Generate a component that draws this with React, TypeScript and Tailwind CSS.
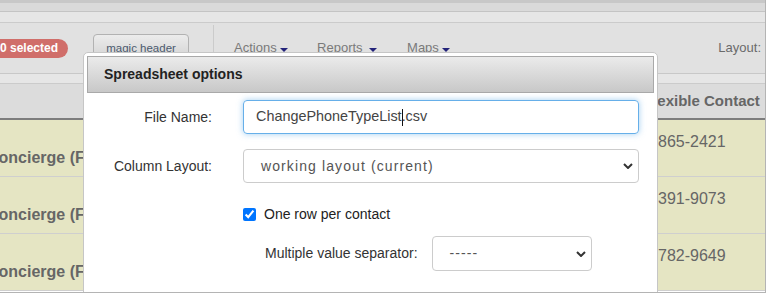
import React from "react";

function Caret() {
  return (
    <span className="inline-block w-[10px] h-[6px]">
      <svg width="10" height="6" viewBox="0 0 10 6">
        <path d="M1 1 L5 5 L9 1" fill="none" stroke="#333" strokeWidth="2" />
      </svg>
    </span>
  );
}

function Tri() {
  return (
    <span className="inline-block w-0 h-0 border-l-[4px] border-r-[4px] border-t-[4px] border-l-transparent border-r-transparent border-t-[#23237a] mt-[3px]" />
  );
}

const rows = [
  { left: "Concierge (Flexible)", right: "865-2421" },
  { left: "Concierge (Flexible)", right: "391-9073" },
  { left: "Concierge (Flexible)", right: "782-9649" },
];

export default function App() {
  return (
    <div className="relative w-[766px] h-[293px] overflow-hidden bg-white border-r border-b border-[#b4b4b4] font-['Liberation_Sans',Arial,sans-serif]">
      <div className="h-[3px] bg-[#c8c8c8]" />
      <div className="h-[9px] bg-[#dadada] border-b border-[#c4c4c4]" />
      <div className="h-[11px] bg-[#e6e6e6] border-b border-[#cbcbcb]" />
      {/* toolbar */}
      <div className="h-[51px] bg-[#e1e1e1] border-b border-[#c8c8c8] flex items-center">
        <div className="ml-[-12px] h-[19px] rounded-full bg-[#d06e6a] pl-[12px] pr-[10px] flex items-center text-white text-[12px] font-bold leading-none">
          0 selected
        </div>
        <div className="ml-[25px] w-[96px] h-[26px] mt-[-2px] rounded-t-[4px] border border-[#b2b2b2] bg-gradient-to-b from-[#ececec] to-[#d3d3d3] flex justify-center pt-[6px] text-[11.5px] leading-[14px] text-[#4b5a6e]">
          magic header
        </div>
        <div className="ml-[24px] w-px h-[46px] bg-[#cbcbcb]" />
        <div className="ml-[20px] w-[83px] flex items-center gap-[3px] text-[13px] text-[#7a7a7a]">
          <span>Actions</span>
          <Tri />
        </div>
        <div className="w-[90px] flex items-center gap-[6px] text-[13px] text-[#7a7a7a]">
          <span>Reports</span>
          <Tri />
        </div>
        <div className="flex items-center gap-[3px] text-[13px] text-[#7a7a7a]">
          <span>Maps</span>
          <Tri />
        </div>
        <div className="ml-auto mr-[4px] text-[13px] text-[#6a6a6a]">Layout:</div>
      </div>
      <div className="h-[10px] bg-[#e6e6e6] border-b border-[#cbcbcb]" />
      {/* table header */}
      <div className="h-[36px] bg-[#dcdcdc] border-b-2 border-[#7d7d7d] flex items-center">
        <div className="w-[644px] shrink-0" />
        <div className="whitespace-nowrap text-[15px] font-bold text-[#666]">Flexible Contact</div>
      </div>
      {rows.map((r, i) => (
        <div key={i} className="h-[57px] bg-[#e5e5c3] border-b border-[#cfcfcf] flex">
          <div className="w-[658px] pt-[28px] overflow-hidden">
            <div className="ml-[-13px] whitespace-nowrap text-[16px] leading-[20px] font-bold text-[#666]">{r.left}</div>
          </div>
          <div className="pt-[12px] text-[16px] leading-[20px] text-[#666] whitespace-nowrap">{r.right}</div>
        </div>
      ))}

      {/* dialog */}
      <div className="absolute left-[83px] top-[52px] w-[575px] h-[260px] bg-white border border-[#c6c6c6] rounded-[5px] p-[3px]">
        <div className="h-[37px] border border-[#a9a9a9] bg-gradient-to-b from-[#ebebeb] to-[#c8c8c8] flex items-center pl-[16px] text-[14px] font-bold text-[#222]">
          Spreadsheet options
        </div>
        <div className="mt-[7px] flex items-center">
          <div className="w-[125px] text-right text-[14px] text-[#333]">File Name:</div>
          <div className="ml-[31px] w-[396px] h-[34px] rounded-[4px] border border-[#66afe9] shadow-[0_0_6px_rgba(102,175,233,0.6)] flex items-center pl-[12px] text-[14.4px] text-[#444] whitespace-nowrap">
            ChangePhoneTypeList<span className="inline-block w-px h-[17px] bg-[#111] -mr-px" />.csv
          </div>
        </div>
        <div className="mt-[15px] flex items-center">
          <div className="w-[125px] text-right text-[14px] text-[#333]">Column Layout:</div>
          <div className="ml-[31px] w-[396px] h-[34px] rounded-[4px] border border-[#cccccc] flex items-center pl-[17px] pr-[5px] text-[14px] tracking-[1.1px] text-[#555]">
            <span className="flex-1">working layout (current)</span>
            <Caret />
          </div>
        </div>
        <div className="mt-[25px] ml-[156px] flex items-center h-[13px]">
          <input type="checkbox" defaultChecked className="w-[13px] h-[13px] m-0 accent-[#0075ff]" />
          <span className="ml-[8px] text-[14px] text-[#222]">One row per contact</span>
        </div>
        <div className="mt-[15px] ml-[178px] flex items-center">
          <span className="text-[14px] text-[#333]">Multiple value separator:</span>
          <div className="ml-[14px] w-[160px] h-[35px] rounded-[4px] border border-[#cccccc] flex items-center pl-[17px] pr-[5px] text-[14px] tracking-[1.1px] text-[#555]">
            <span className="flex-1">-----</span>
            <Caret />
          </div>
        </div>
      </div>
    </div>
  );
}
